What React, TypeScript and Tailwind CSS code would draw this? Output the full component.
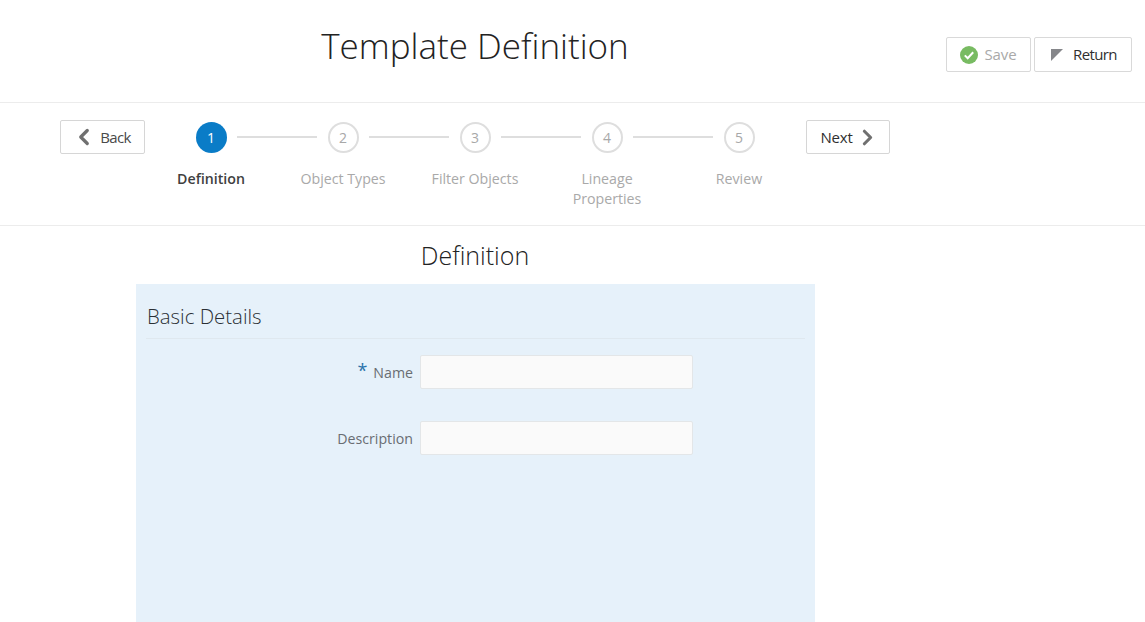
import { ChevronLeft, ChevronRight } from "lucide-react";

const STEPS = [
  { n: 1, label: "Definition" },
  { n: 2, label: "Object Types" },
  { n: 3, label: "Filter Objects" },
  { n: 4, label: "Lineage Properties" },
  { n: 5, label: "Review" },
];

function Step({ n, label, index }: { n: number; label: string; index: number }) {
  const active = index === 0;
  return (
    <div className="flex w-[132px] flex-col items-center">
      <div className="flex h-[34px] w-full items-center justify-between">
        <div className={index === 0 ? "h-[2px] w-[40px]" : "h-[2px] w-[40px] bg-[#dedede]"} />
        {active ? (
          <div className="flex h-[31px] w-[31px] items-center justify-center rounded-full bg-[#0a7cc7] text-[14px] text-white">
            {n}
          </div>
        ) : (
          <div className="flex h-[31px] w-[31px] items-center justify-center rounded-full border-2 border-[#dedede] text-[14px] text-[#a8a8a8]">
            {n}
          </div>
        )}
        <div className={index === 4 ? "h-[2px] w-[40px]" : "h-[2px] w-[40px] bg-[#dedede]"} />
      </div>
      <div
        className={
          active
            ? "mt-[15px] w-[100px] text-center text-[14.2px] leading-[20px] font-semibold text-[#3f3f3f]"
            : "mt-[15px] w-[100px] text-center text-[14.2px] leading-[20px] text-[#a9a9a9]"
        }
      >
        {label}
      </div>
    </div>
  );
}

export default function App() {
  return (
    <div className="h-[622px] w-[1145px] overflow-hidden bg-white font-['Open_Sans',sans-serif]">
      {/* Page title + actions */}
      <header className="flex h-[103px] border-b border-[#ececec]">
        <h1 className="w-[950px] pt-[22px] text-center text-[35px] leading-[48px] font-light text-[#222222]">
          Template Definition
        </h1>
        <div className="flex h-[35px] mt-[37px] ml-[-4px] gap-[3px]">
          <button className="flex w-[85px] items-center justify-center gap-[6px] rounded-[2px] border border-[#d9d9d9] text-[15px] tracking-[-0.1px] text-[#a9a9a9]">
            <svg width="18" height="18" viewBox="0 0 18 18">
              <circle cx="9" cy="9" r="9" fill="#78bb62" />
              <path d="M4.8 9.4l2.9 2.9 5.5-6" fill="none" stroke="#fff" strokeWidth="2" />
            </svg>
            Save
          </button>
          <button className="flex w-[98px] items-center justify-center gap-[10px] rounded-[2px] border border-[#d9d9d9] pl-[2px] text-[15px] tracking-[-0.6px] text-[#2f2f2f]">
            <svg width="12" height="12" viewBox="0 0 12 12">
              <path d="M0 0h12L0 12z" fill="#85868a" />
            </svg>
            Return
          </button>
        </div>
      </header>

      {/* Train stepper */}
      <section className="flex h-[123px] border-b border-[#ececec] pl-[60px] pt-[17px]">
        <button className="flex h-[34px] w-[85px] items-center justify-center gap-[3px] rounded-[2px] border border-[#d6d6d6] pr-[3px] text-[15px] tracking-[-0.7px] text-[#4a4a4a]">
          <ChevronLeft className="h-[26px] w-[26px] text-[#707070]" strokeWidth={3} />
          Back
        </button>
        <div className="flex">
          {STEPS.map((s, i) => (
            <Step key={s.n} n={s.n} label={s.label} index={i} />
          ))}
        </div>
        <button className="ml-px flex h-[34px] w-[84px] items-center justify-center gap-[2px] rounded-[2px] border border-[#d6d6d6] pl-[4px] text-[15px] tracking-[-0.2px] text-[#2f2f2f]">
          Next
          <ChevronRight className="h-[25px] w-[25px] text-[#707070]" strokeWidth={3} />
        </button>
      </section>

      <h2 className="w-[950px] pt-[12px] text-center text-[25px] leading-[34px] font-light text-[#222222]">
        Definition
      </h2>

      {/* Form panel */}
      <div className="mt-[12px] ml-[136px] h-[338px] w-[679px] bg-[#e6f1fa] px-[10px]">
        <h3 className="border-b border-[#dfe8ef] pt-[16px] pb-[5px] pl-px text-[20.4px] leading-[33px] font-light text-[#2a2f34]">
          Basic Details
        </h3>
        <div className="mt-[16px] flex items-center">
          <label className="flex w-[267px] items-center justify-end pt-[2px] text-[14.2px] text-[#696d72]">
            <span className="mr-[6px] mb-[6px] text-[18px] leading-none text-[#2a73ab]">*</span>
            Name
          </label>
          <input className="ml-[7px] h-[34px] w-[273px] rounded-[2px] border border-[#e3e6e8] bg-[#fafafa]" />
        </div>
        <div className="mt-[32px] flex items-center">
          <label className="w-[267px] pt-[2px] text-right text-[14.2px] text-[#696d72]">Description</label>
          <input className="ml-[7px] h-[34px] w-[273px] rounded-[2px] border border-[#e3e6e8] bg-[#fafafa]" />
        </div>
      </div>
    </div>
  );
}
